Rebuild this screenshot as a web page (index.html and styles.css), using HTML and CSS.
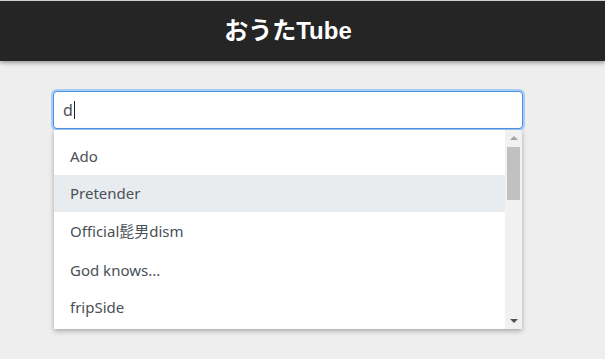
FILE: index.html
```html
<!DOCTYPE html>
<html lang="ja">
<head>
<meta charset="utf-8">
<title>おうたTube</title>
<link rel="stylesheet" href="styles.css">
</head>
<body>
<header class="topbar"><h1 class="title">おうたTube</h1></header>
<main class="main">
  <div class="search">
    <div class="input"><span class="typed">d</span><span class="caret"></span></div>
    <div class="dropdown">
      <ul class="list">
        <li class="item">Ado</li>
        <li class="item active">Pretender</li>
        <li class="item cjk">Official髭男dism</li>
        <li class="item">God knows...</li>
        <li class="item">fripSide</li>
      </ul>
      <div class="scrollbar">
        <div class="arrow up"></div>
        <div class="track"><div class="thumb"></div></div>
        <div class="arrow down"></div>
      </div>
    </div>
  </div>
</main>
</body>
</html>
```
FILE: styles.css
```css
html, body { margin: 0; padding: 0; }
body {
  background: #eeeeee;
  font-family: "Noto Sans", "Noto Sans CJK JP", sans-serif;
  color: #495057;
  height: 359px;
  overflow: hidden;
}
.topbar {
  border-top: 1px solid #cfcfcf;
  background: #252525;
  height: 60px;
  display: flex;
  align-items: center;
  justify-content: center;
  padding-right: 29px;
  box-shadow: 0 2px 4px rgba(0,0,0,0.35);
}
.title {
  margin: 0;
  color: #ffffff;
  font-family: "Liberation Sans", "Noto Sans CJK JP", sans-serif;
  font-weight: bold;
  font-size: 24px;
  line-height: 1;
}
.main { padding: 30px 0 0 53px; }
.search { width: 470px; }
.input {
  box-sizing: border-box;
  height: 38px;
  background: #fff;
  border: 1px solid #4a94e6;
  border-radius: 4px;
  box-shadow: 0 0 0 2px rgba(120, 180, 250, 0.6);
  display: flex;
  align-items: center;
  padding-left: 9px;
  font-size: 16px;
  color: #495057;
}
.caret { width: 1px; height: 18px; background: #222; margin-left: 1px; }
.dropdown {
  margin: 1px 1px 0 1px;
  height: 199px;
  background: #fff;
  display: flex;
  box-shadow: 0 2px 5px rgba(0,0,0,0.3);
  overflow: hidden;
}
.list {
  flex: 1;
  list-style: none;
  margin: 0;
  padding: 8px 0 0 0;
}
.item {
  height: 37px;
  line-height: 37px;
  padding-left: 16px;
  font-size: 15px;
}
.item.cjk { height: 40px; line-height: 39px; }
.item.active { background: #e9ecef; }
.scrollbar {
  width: 17px;
  background: #f1f1f1;
  display: flex;
  flex-direction: column;
  align-items: center;
}
.arrow { width: 0; height: 0; border-left: 4px solid transparent; border-right: 4px solid transparent; }
.arrow.up { border-bottom: 4px solid #a3a3a3; margin: 6px 0 7px; }
.arrow.down { border-top: 4px solid #505050; margin: 6px 0 6px; }
.track { flex: 1; width: 100%; display: flex; justify-content: center; }
.thumb { width: 13px; height: 53px; background: #c1c1c1; }
```
